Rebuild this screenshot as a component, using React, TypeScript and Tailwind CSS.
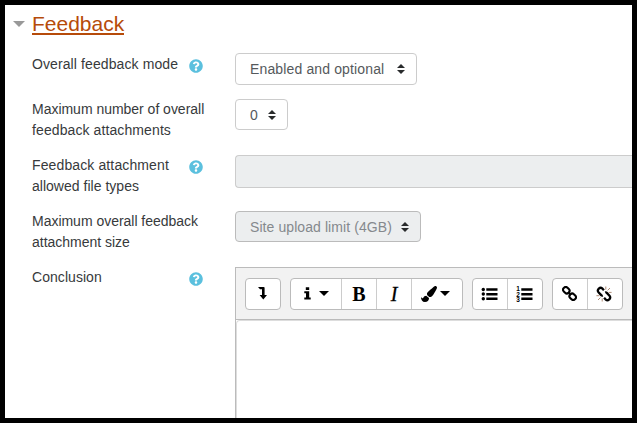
import { ReactNode } from "react";
import { FaPaintBrush, FaQuestionCircle } from "react-icons/fa";

function SortArrows() {
  return (
    <svg className="w-2 h-[10px] shrink-0" viewBox="0 0 8 10" fill="#292b2c">
      <path d="M4 0L8 4H0zM4 10L0 6h8z" />
    </svg>
  );
}

function Caret() {
  return (
    <svg className="w-[10px] h-[5px]" viewBox="0 0 10 5">
      <path d="M0 0h10L5 5z" />
    </svg>
  );
}

function InfoIcon() {
  return (
    <svg className="w-[7px] h-[13px]" viewBox="0 0 7 13">
      <path d="M1.8 .3h3.4V3H1.8zM.3 4.3h4.9v6.2h1.5v2H.3v-2H2V6.3H.3z" />
    </svg>
  );
}

function LevelDown() {
  return (
    <svg className="w-[9px] h-[13px]" viewBox="0 0 9 13">
      <path d="M0 0H5.7Q6.6 0 6.6 .8V8H9L5.3 12.6L1.6 8H4V2.3H2z" />
    </svg>
  );
}

function ListIcon({ numbered = false }: { numbered?: boolean }) {
  return (
    <svg className="w-[17px] h-4" viewBox="0 0 17 16">
      {numbered ? (
        <g fontFamily="Liberation Sans" fontSize="6.5" fontWeight="bold">
          <text x="0.3" y="5">1</text>
          <text x="0.3" y="10.5">2</text>
          <text x="0.3" y="16">3</text>
        </g>
      ) : (
        <g>
          <circle cx="2.3" cy="3.5" r="1.7" />
          <circle cx="2.3" cy="8" r="1.7" />
          <circle cx="2.3" cy="12.7" r="1.7" />
        </g>
      )}
      <path d="M5.3 2.3h11.2v2.4H5.3zM5.3 7h11.2v2.4H5.3zM5.3 11.6h11.2V14H5.3z" />
    </svg>
  );
}

function LinkIcon() {
  return (
    <svg className="w-[15px] h-[15px]" viewBox="0 0 16 16" fill="none" stroke="#000" strokeWidth="2.2">
      <rect x="1" y="1.7" width="7.2" height="5.6" rx="2.6" transform="rotate(45 4.6 4.5)" />
      <rect x="7.8" y="8.7" width="7.2" height="5.6" rx="2.6" transform="rotate(45 11.4 11.5)" />
      <path d="M6.4 6.4l3.2 3.2" />
    </svg>
  );
}

function UnlinkIcon() {
  return (
    <svg className="w-4 h-4" viewBox="0 0 16 16" fill="none">
      <path
        stroke="#000"
        strokeWidth="2.3"
        d="M7.9 4.2L6.2 2.4Q4.6 1 2.8 2.6Q1 4.4 2.5 6.2L5.2 9.1Q5.9 9.8 6.8 9.4M8.1 11.8l1.7 1.8Q11.4 15 13.2 13.4Q15 11.6 13.5 9.8L10.8 6.9Q10.1 6.2 9.2 6.6"
      />
      <path strokeWidth="1" stroke="#b08d78" d="M9.8 3.6V.5M11.6 4.4l2.4-2.4M12.6 6.4h3M.4 9.7h3M2 14l2.4-2.4M6.2 12.5v3" />
    </svg>
  );
}

function Row({ label, help = false, className = "", children }: { label: ReactNode; help?: boolean; className?: string; children: ReactNode }) {
  return (
    <div className={`flex items-start text-[14px] ${className}`}>
      <div className="w-[157px] shrink-0 whitespace-nowrap leading-[21px] text-[#373a3c]">{label}</div>
      <div className="w-[46px] shrink-0 pt-[5px]">
        {help && <FaQuestionCircle className="size-[14px] text-[#5bc0de]" />}
      </div>
      {children}
    </div>
  );
}

function Group({ children, className = "" }: { children: ReactNode; className?: string }) {
  return (
    <div className={`flex h-8 shrink-0 rounded border border-[#bbb] bg-white divide-x divide-[#ccc] ${className}`}>
      {children}
    </div>
  );
}

function Tool({ children, className = "w-[35px]" }: { children: ReactNode; className?: string }) {
  return <button className={`flex items-center justify-center ${className}`}>{children}</button>;
}

function App() {
  return (
    <div className="w-[637px] h-[423px] overflow-hidden border-[5px] border-black bg-white font-['Liberation_Sans',sans-serif]">
      <div className="flex items-start h-[49px] pl-2 pt-[6px]">
        <svg className="mt-[10px] w-3 h-[6px]" viewBox="0 0 12 6" fill="#999">
          <path d="M0 0h12L6 6z" />
        </svg>
        <a href="#" className="ml-[7px] text-[21px] leading-[26px] h-[24px] border-b-2 border-[#b64b0a] text-[#b64b0a]">Feedback</a>
      </div>

      <div className="pl-[27px]">
        <Row label="Overall feedback mode" help className="h-[45px] tracking-[0.1px]">
          <button className="-mt-px flex h-8 w-[182px] items-center justify-between rounded border border-[#ccc] pl-[14px] pr-[11px] tracking-[0.14px] text-[#55595c]">
            Enabled and optional
            <SortArrows />
          </button>
        </Row>
        <Row label={<>Maximum number of overall<br /><span className="tracking-[0.1px]">feedback attachments</span></>} className="h-14 tracking-[-0.02px]">
          <button className="flex h-[31px] w-[53px] items-center justify-between rounded border border-[#ccc] pl-[14px] pr-[11px] pt-px text-[#55595c]">
            0
            <SortArrows />
          </button>
        </Row>
        <Row label={<>Feedback attachment<br /><span className="tracking-[0.02px]">allowed file types</span></>} help className="h-14 tracking-[0.12px]">
          <div className="h-[33px] flex-1 rounded-l border border-r-0 border-[#ccc] bg-[#eceeef]" />
        </Row>
        <Row label={<>Maximum overall feedback<br />attachment size</>} className="h-14 tracking-[-0.02px]">
          <button className="flex h-[31px] w-[186px] items-center justify-between rounded border border-[#bbb] bg-[#eceeef] pl-[14px] pr-[11px] pt-px tracking-[0.08px] text-[#85898d]">
            Site upload limit (4GB)
            <SortArrows />
          </button>
        </Row>
        <Row label="Conclusion" help className="tracking-[0.05px]">
          <div className="h-[160px] flex-1 border-l border-t border-[#bbb]">
            <div className="flex h-[52px] items-center border-b border-[#bbb] bg-[#f2f2f2] pl-[9px]">
              <Group className="w-9">
                <Tool className="w-full pr-0.5"><LevelDown /></Tool>
              </Group>
              <Group className="ml-[9px] w-[173px]">
                <Tool className="w-[51px] gap-[8px]">
                  <InfoIcon />
                  <Caret />
                </Tool>
                <Tool className="w-[35px] font-['Liberation_Serif',serif] text-xl font-bold">B</Tool>
                <Tool className="w-[35px] font-['Liberation_Serif',serif] text-xl italic [-webkit-text-stroke:0.3px_black]">I</Tool>
                <Tool className="w-[50px] gap-[3px] pr-1">
                  <FaPaintBrush className="size-4" />
                  <Caret />
                </Tool>
              </Group>
              <Group className="ml-[9px] w-[71px]">
                <Tool><ListIcon /></Tool>
                <Tool><ListIcon numbered /></Tool>
              </Group>
              <Group className="ml-[9px] w-[71px]">
                <Tool className="w-[35px] pr-px"><LinkIcon /></Tool>
                <Tool className="w-[35px] pr-px"><UnlinkIcon /></Tool>
              </Group>
            </div>
            <div className="h-[110px] rounded-tl border-l border-t border-[#ddd] bg-white" />
          </div>
        </Row>
      </div>
    </div>
  );
}

export default App;
